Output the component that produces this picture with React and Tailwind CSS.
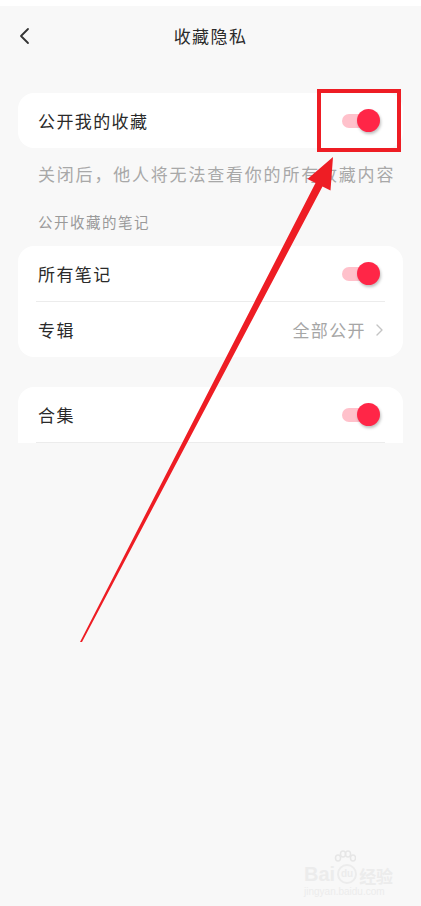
import React from 'react';

const Toggle = () => (
    <div className="relative w-[38px] h-[24px] shrink-0">
        <div className="absolute left-0 top-[5px] w-[34px] h-[14px] rounded-full bg-[#ffc1cb]" />
        <div className="absolute right-0 top-0 w-[23px] h-[23px] rounded-full bg-[#ff2647] shadow-[1px_2px_3px_rgba(0,0,0,0.25)]" />
    </div>
);

const Row = ({ label, children }) => (
    <div className="h-[55px] flex items-center justify-between pl-[20px] pr-[23px]">
        <span className="text-[17px] tracking-[1.4px] text-[#2a2a2a]">{label}</span>
        {children}
    </div>
);

const App = () => {
    return (
        <div className="relative min-h-[906px] w-full overflow-hidden bg-[#f8f8f8]" style={{ fontFamily: '"Noto Sans CJK SC", "Noto Sans", sans-serif' }}>
            {/* cut-off status bar */}
            <div className="h-[6px] bg-white" />

            {/* Header */}
            <header className="relative h-[60px] flex items-center justify-center">
                <svg className="absolute left-[18px] top-[21px]" width="14" height="18" viewBox="0 0 14 18" fill="none">
                    <polyline points="10,2 3,9 10,16" stroke="#333" strokeWidth="1.8" strokeLinecap="round" strokeLinejoin="round" />
                </svg>
                <h1 className="text-[17px] tracking-[1.4px] text-[#2a2a2a]">收藏隐私</h1>
            </header>

            <main className="px-[18px] pt-[27px]">
                <div className="bg-white rounded-2xl">
                    <Row label="公开我的收藏"><Toggle /></Row>
                </div>

                <p className="mt-[14px] pl-[20px] leading-[24px] text-[17px] tracking-[1.8px] text-[#a8a8a8] whitespace-nowrap">
                    关闭后，他人将无法查看你的所有收藏内容
                </p>

                <p className="mt-[26px] pl-[20px] leading-[20px] text-[14.5px] tracking-[1.5px] text-[#9a9a9a]">公开收藏的笔记</p>

                <div className="mt-[14px] bg-white rounded-2xl">
                    <Row label="所有笔记"><Toggle /></Row>
                    <div className="mx-[18px] h-px bg-[#ececec]" />
                    <div className="h-[55px] flex items-center justify-between pl-[20px] pr-[20px]">
                        <span className="text-[17px] tracking-[1.4px] text-[#2a2a2a]">专辑</span>
                        <div className="flex items-center gap-[10px]">
                            <span className="text-[17px] tracking-[1.4px] text-[#a6a6a6]">全部公开</span>
                            <svg width="7" height="12" viewBox="0 0 7 12" fill="none">
                                <polyline points="1,1 6,6 1,11" stroke="#c4c4c4" strokeWidth="1.4" strokeLinecap="round" strokeLinejoin="round" />
                            </svg>
                        </div>
                    </div>
                </div>

                <div className="mt-[30px] bg-white rounded-t-2xl">
                    <Row label="合集"><Toggle /></Row>
                    <div className="mx-[18px] h-px bg-[#ececec]" />
                </div>
            </main>

            {/* annotation overlay: red box + arrow */}
            <div className="absolute left-[317px] top-[89px] w-[84px] h-[63px] border-[4px] border-[#ee1d24]" />
            <svg className="absolute left-0 top-0 pointer-events-none" width="421" height="906" viewBox="0 0 421 906">
                <polygon
                    points="80,642 315.5,183 307.5,179 333,157 330.5,190.5 322.5,186.5 82,642"
                    fill="#ee1d24"
                />
            </svg>

            {/* watermark */}
            <div className="absolute left-[304px] top-[850px] flex flex-col items-start select-none">
                <svg className="ml-[30px]" width="22" height="14" viewBox="0 0 22 14" fill="none" stroke="#e6e6e6" strokeWidth="1.5">
                    <ellipse cx="4" cy="8" rx="2.5" ry="3" />
                    <ellipse cx="9" cy="4" rx="2.5" ry="3" />
                    <ellipse cx="14" cy="4" rx="2.5" ry="3" />
                    <ellipse cx="19" cy="8" rx="2.5" ry="3" />
                </svg>
                <div className="flex items-end gap-[2px] text-[#ececec] font-bold leading-none" style={{ fontFamily: '"Liberation Sans", sans-serif' }}>
                    <span className="text-[20px]">Bai</span>
                    <span className="w-[20px] h-[20px] rounded-full border-[2px] border-[#ececec] text-[10px] flex items-center justify-center">du</span>
                    <span className="text-[17px]" style={{ fontFamily: '"Noto Sans CJK SC", sans-serif' }}>经验</span>
                </div>
                <span className="mt-[3px] text-[10px] text-[#ececec] leading-none" style={{ fontFamily: '"Liberation Sans", sans-serif' }}>jingyan.baidu.com</span>
            </div>
        </div>
    );
};

export default App;
